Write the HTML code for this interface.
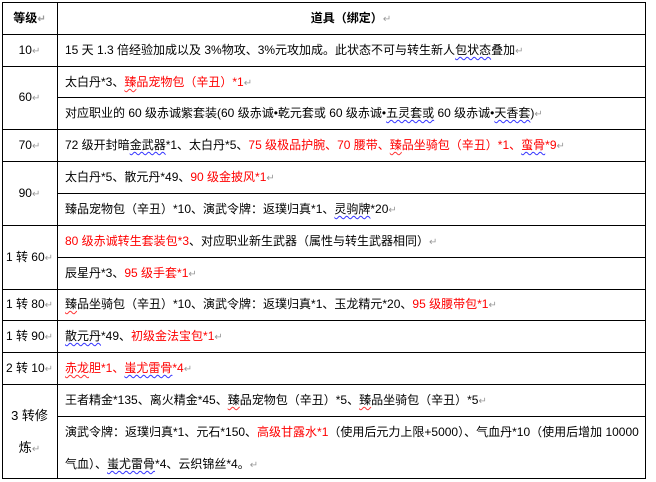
<!DOCTYPE html>
<html><head><meta charset="utf-8"><style>
body{margin:0;width:656px;height:482px;background:#fff;position:relative;overflow:hidden;font-family:"Liberation Sans","Noto Sans CJK SC",sans-serif;font-size:12px;color:#000}
.h{position:absolute;left:2px;width:644px;height:1px;background:#000}
.v{position:absolute;top:2px;width:1px;height:477px;background:#000}
.t{position:absolute;white-space:nowrap;line-height:16px}
.r{color:#f00}
.m{color:#999;font-size:10px}
.w{text-decoration:underline wavy #33f;text-underline-offset:2px;text-decoration-thickness:1px}
.wr{text-decoration:underline wavy #f33;text-underline-offset:2px;text-decoration-thickness:1px}
.c{text-align:center;width:55px;left:2px}
</style></head><body>
<div class="h" style="top:2px"></div>
<div class="h" style="top:34px"></div>
<div class="h" style="top:66px"></div>
<div class="h" style="top:97px;left:57px;width:589px"></div>
<div class="h" style="top:129px"></div>
<div class="h" style="top:161px"></div>
<div class="h" style="top:193px;left:57px;width:589px"></div>
<div class="h" style="top:225px"></div>
<div class="h" style="top:257px;left:57px;width:589px"></div>
<div class="h" style="top:289px"></div>
<div class="h" style="top:320px"></div>
<div class="h" style="top:352px"></div>
<div class="h" style="top:384px"></div>
<div class="h" style="top:416px;left:57px;width:589px"></div>
<div class="h" style="top:478px"></div>
<div class="v" style="left:2px"></div>
<div class="v" style="left:57px"></div>
<div class="v" style="left:645px"></div>

<div class="t c" style="top:10px;font-weight:bold">等级<span class="m">↵</span></div>
<div class="t" style="top:10px;left:57px;width:588px;text-align:center;font-weight:bold">道具（绑定）<span class="m" style="font-weight:normal">↵</span></div>

<div class="t c" style="top:42px">10<span class="m">↵</span></div>
<div class="t" style="top:42px;left:65px">15 天 1.3 倍经验加成以及 3%物攻、3%元攻加成。此状态不可与转生新人<span class="w">包状态</span>叠加<span class="m">↵</span></div>

<div class="t c" style="top:89px">60<span class="m">↵</span></div>
<div class="t" style="top:74px;left:65px">太白丹*3、<span class="r"><span class="wr">臻</span>品宠物包（辛丑）*1</span><span class="m">↵</span></div>
<div class="t" style="top:105px;left:65px">对应职业的 60 级赤诚紫套装(60 级赤诚•乾元套或 60 级赤诚•<span class="w">五灵套或</span> 60 级赤诚•<span class="w">天香套</span>)<span class="m">↵</span></div>

<div class="t c" style="top:137px">70<span class="m">↵</span></div>
<div class="t" style="top:137px;left:65px">72 级开封暗<span class="w">金武器</span>*1、太白丹*5、<span class="r">75 级极品护腕、70 腰带、<span class="wr">臻</span>品坐骑包（辛丑）*1、<span class="w">蛮骨</span>*9</span><span class="m">↵</span></div>

<div class="t c" style="top:185px">90<span class="m">↵</span></div>
<div class="t" style="top:169px;left:65px">太白丹*5、散元丹*49、<span class="r">90 级金披风*1</span><span class="m">↵</span></div>
<div class="t" style="top:201px;left:65px">臻品宠物包（辛丑）*10、演武令牌：返璞归真*1、<span class="w">灵驹牌</span>*20<span class="m">↵</span></div>

<div class="t c" style="top:249px">1 转 60<span class="m">↵</span></div>
<div class="t" style="top:233px;left:65px"><span class="r">80 级赤诚转生套装包*3</span>、对应职业新生武器（属性与转生武器相同）<span class="m">↵</span></div>
<div class="t" style="top:265px;left:65px">辰星丹*3、<span class="r">95 级手套*1</span><span class="m">↵</span></div>

<div class="t c" style="top:296px">1 转 80<span class="m">↵</span></div>
<div class="t" style="top:296px;left:65px"><span class="wr">臻</span>品坐骑包（辛丑）*10、演武令牌：返璞归真*1、玉龙精元*20、<span class="r">95 级腰带包*1</span><span class="m">↵</span></div>

<div class="t c" style="top:328px">1 转 90<span class="m">↵</span></div>
<div class="t" style="top:328px;left:65px"><span class="w">散元丹</span>*49、<span class="r">初级金法宝包*1</span><span class="m">↵</span></div>

<div class="t c" style="top:360px">2 转 10<span class="m">↵</span></div>
<div class="t" style="top:360px;left:65px"><span class="r"><span class="wr">赤龙</span>胆*1、<span class="w">蚩尤雷骨</span>*4</span><span class="m">↵</span></div>

<div class="t c" style="top:408px;font-size:13px">3 转修</div>
<div class="t c" style="top:440px;font-size:13px">炼<span class="m">↵</span></div>
<div class="t" style="top:392px;left:65px">王者精金*135、离火精金*45、<span class="wr">臻</span>品宠物包（辛丑）*5、<span class="wr">臻</span>品坐骑包（辛丑）*5<span class="m">↵</span></div>
<div class="t" style="top:424px;left:65px">演武令牌：返璞归真*1、元石*150、<span class="r">高级甘露水*1</span>（使用后元力上限+5000）、气血丹*10（使用后增加 10000</div>
<div class="t" style="top:456px;left:65px">气血）、<span class="w">蚩尤雷骨</span>*4、云织锦丝*4。<span class="m">↵</span></div>
</body></html>
